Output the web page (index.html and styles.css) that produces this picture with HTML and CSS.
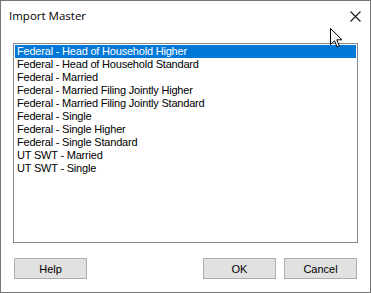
FILE: index.html
```html
<!DOCTYPE html>
<html lang="en">
<head>
    <meta charset="UTF-8">
    <title>Import Master</title>
    <link rel="stylesheet" href="styles.css">
</head>
<body>
    <div class="window">
        <div class="titlebar">
            <span class="title">Import Master</span>
            <svg class="close" width="11" height="11" viewBox="0 0 11 11">
                <path d="M0.5 0.5 L10.5 10.5 M10.5 0.5 L0.5 10.5" stroke="#1a1a1a" stroke-width="1.1" fill="none"/>
            </svg>
        </div>

        <div class="content">
            <ul class="list">
                <li class="item selected">Federal - Head of Household Higher</li>
                <li class="item">Federal - Head of Household Standard</li>
                <li class="item">Federal - Married</li>
                <li class="item">Federal - Married Filing Jointly Higher</li>
                <li class="item">Federal - Married Filing Jointly Standard</li>
                <li class="item">Federal - Single</li>
                <li class="item">Federal - Single Higher</li>
                <li class="item">Federal - Single Standard</li>
                <li class="item">UT SWT - Married</li>
                <li class="item">UT SWT - Single</li>
            </ul>
        </div>

        <div class="footer">
            <button class="btn">Help</button>
            <div class="spacer"></div>
            <button class="btn">OK</button>
            <button class="btn">Cancel</button>
        </div>

        <!-- mouse pointer -->
        <svg class="cursor" width="13" height="20" viewBox="0 0 13 20">
            <path d="M0.5 0.5 L0.5 16.5 L4.5 12.8 L7 18.8 L9.3 17.8 L6.8 11.8 L12 11.8 Z" fill="#fff" stroke="#000" stroke-width="1"/>
        </svg>
    </div>
</body>
</html>
```

FILE: styles.css
```css
/* Dialog */
body {
    margin: 0;
    background: #fff;
}
.window {
    position: relative;
    width: 371px;
    height: 293px;
    box-sizing: border-box;
    border: 1px solid #767676;
    background-color: #ffffff;
    display: flex;
    flex-direction: column;
    font-family: "Liberation Sans", Arial, sans-serif;
    font-size: 11px;
    color: #000;
}
.titlebar {
    height: 30px;
    display: flex;
    align-items: center;
    justify-content: space-between;
    padding-left: 8px;
    padding-right: 9px;
}
.title {
    font-family: "Open Sans", "Noto Sans", sans-serif;
    font-size: 11.5px;
    color: #000;
    padding-bottom: 1px;
}
.close {
    display: block;
}

/* List box */
.content {
    padding: 12px 12px 0 12px;
}
.list {
    list-style: none;
    margin: 0;
    padding: 1px;
    width: 345px;
    height: 200px;
    box-sizing: border-box;
    border: 1px solid #828790;
}
.item {
    height: 13px;
    line-height: 13px;
    padding-left: 2px;
    white-space: nowrap;
    letter-spacing: -0.2px;
}
.selected {
    background-color: #0078d7;
    color: #fff;
}

/* Buttons */
.footer {
    display: flex;
    gap: 8px;
    padding: 15px 13px 0 13px;
}
.spacer {
    flex: 1;
}
.btn {
    width: 73px;
    height: 21px;
    margin: 0;
    padding: 0;
    background-color: #e1e1e1;
    border: 1px solid #adadad;
    font-family: "Liberation Sans", Arial, sans-serif;
    font-size: 11px;
    color: #000;
}
.cursor {
    position: absolute;
    left: 329px;
    top: 27px;
}
```
